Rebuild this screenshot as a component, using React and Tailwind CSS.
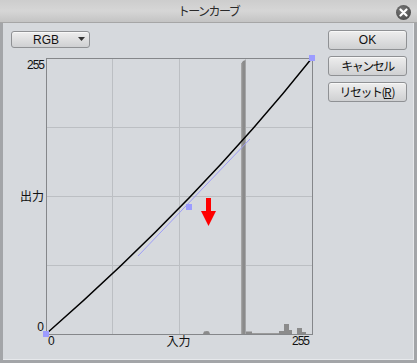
import React from "react";

function Btn({ children }) {
  return (
    <div className="flex items-center justify-center w-[79px] h-[20px] rounded-[3px] border border-[#8f9194] bg-gradient-to-b from-[#eeeeee] to-[#cfd0d2] text-[12px] leading-none text-[#111] shadow-[inset_0_1px_0_#f8f8f8]">
      {children}
    </div>
  );
}

function Chart() {
  const gx = [112.5, 179.5, 245.5];
  const gy = [127.5, 196.5, 265.5];
  return (
    <svg width="267" height="277" viewBox="46 58 267 277" className="overflow-visible block">
      {gx.map((x) => (
        <line key={x} x1={x} y1={58} x2={x} y2={334} stroke="#bcbfc3" strokeWidth="1" />
      ))}
      {gy.map((y) => (
        <line key={y} x1={46} y1={y} x2={312} y2={y} stroke="#bcbfc3" strokeWidth="1" />
      ))}
      {/* histogram */}
      <polygon points="241,64 243,61 245.5,60 245.5,334 241,334" fill="#8b8b8b" />
      <rect x="241" y="63" width="1.3" height="271" fill="#a4a4a4" />
      <polygon points="203,334 204,331.5 207,331 209,331.5 210,334" fill="#8b8b8b" />
      <rect x="246" y="331.5" width="6" height="2.5" fill="#8b8b8b" />
      <rect x="252" y="333" width="30" height="1" fill="#9a9a9a" />
      <rect x="279" y="331" width="5" height="3" fill="#8b8b8b" />
      <rect x="284" y="324" width="5" height="10" fill="#8b8b8b" />
      <rect x="289" y="330" width="3" height="4" fill="#8b8b8b" />
      <rect x="297" y="328" width="5" height="6" fill="#8b8b8b" />
      <rect x="302" y="332" width="4" height="2" fill="#8b8b8b" />
      {/* border */}
      <rect x="46.5" y="58.5" width="266" height="276" fill="none" stroke="#85878a" strokeWidth="1" />
      {/* handle line */}
      <line x1="138" y1="256" x2="250" y2="139" stroke="#9e9df7" strokeWidth="1" />
      {/* curve */}
      <path d="M46 334 Q199 200 312 58" fill="none" stroke="#000" strokeWidth="1.4" />
      {/* control points */}
      <rect x="43" y="331" width="6" height="6" fill="#9c9cff" />
      <rect x="309" y="55" width="6" height="6" fill="#9c9cff" />
      <rect x="186" y="204" width="6" height="6" fill="#9c9cff" />
      {/* red arrow */}
      <rect x="206" y="198" width="5" height="14" fill="#ff0000" />
      <polygon points="201,211 216,211 208.5,226" fill="#ff0000" />
    </svg>
  );
}

export default function App() {
  return (
    <div className="w-[417px] h-[363px] flex flex-col bg-[#d6d9dd] overflow-hidden font-['Noto_Sans_CJK_JP','Liberation_Sans',sans-serif] text-[#111]">
      {/* title bar */}
      <div className="relative h-[23px] flex items-center justify-center bg-gradient-to-b from-[#cdcdcd] via-[#d6d6d6] to-[#c4c4c4] border-b border-[#a6a6a6] shrink-0">
        <span className="text-[12px] leading-none text-[#2a2a2a] tracking-[-1.5px]">トーンカーブ</span>
        <div className="absolute right-[6px] top-[5px] w-[15px] h-[15px] rounded-full bg-[radial-gradient(circle_at_40%_35%,#7a7a7a,#3e3e3e)] flex items-center justify-center">
          <svg width="9" height="9" viewBox="0 0 9 9">
            <path d="M1.5 1.5 L7.5 7.5 M7.5 1.5 L1.5 7.5" stroke="#fff" strokeWidth="2.2" strokeLinecap="round" />
          </svg>
        </div>
      </div>
      {/* body */}
      <div className="flex-1 flex border-l-[3px] border-r-[3px] border-b-[3px] border-[#a3a5a8]">
        <div className="flex-1 flex shadow-[inset_-1px_-1px_0_#e6e8eb]">
          <div className="flex flex-col pl-[8px] pt-[8px]">
            <div className="relative flex items-center w-[79px] h-[17px] rounded-[3px] border border-[#8f9194] bg-gradient-to-b from-[#eeeeee] to-[#cfd0d2] shadow-[inset_0_1px_0_#f8f8f8]">
              <span className="ml-[21px] text-[12px] leading-none font-['Liberation_Sans',sans-serif]">RGB</span>
              <svg className="ml-auto mr-[3px]" width="8" height="5" viewBox="0 0 8 5">
                <polygon points="0,0 7,0 3.5,4" fill="#333" />
              </svg>
            </div>
            <div className="mt-[10px] grid grid-cols-[35px_267px] grid-rows-[277px_auto] text-[12px] leading-none">
              <div className="flex flex-col justify-between items-end pr-[2px] pt-[0.5px] pb-[2.5px]">
                <span className="tracking-[-1px] font-['Liberation_Sans',sans-serif]">255</span>
                <span>出力</span>
                <span className="font-['Liberation_Sans',sans-serif]">0</span>
              </div>
              <Chart />
              <div />
              <div className="grid grid-cols-3 pl-[2px] pr-[4px]">
                <span className="text-left font-['Liberation_Sans',sans-serif]">0</span>
                <span className="text-center">入力</span>
                <span className="text-right tracking-[-1px] font-['Liberation_Sans',sans-serif]">255</span>
              </div>
            </div>
          </div>
          <div className="ml-auto mr-[7px] pt-[7px] flex flex-col gap-[6px]">
            <Btn>
              <span className="font-['Liberation_Sans',sans-serif]">OK</span>
            </Btn>
            <Btn>
              <span className="tracking-[-1.5px]">キャンセル</span>
            </Btn>
            <Btn>
              <span className="tracking-[-1.5px]">リセット(</span>
              <span className="underline">R</span>
              <span>)</span>
            </Btn>
          </div>
        </div>
      </div>
    </div>
  );
}
